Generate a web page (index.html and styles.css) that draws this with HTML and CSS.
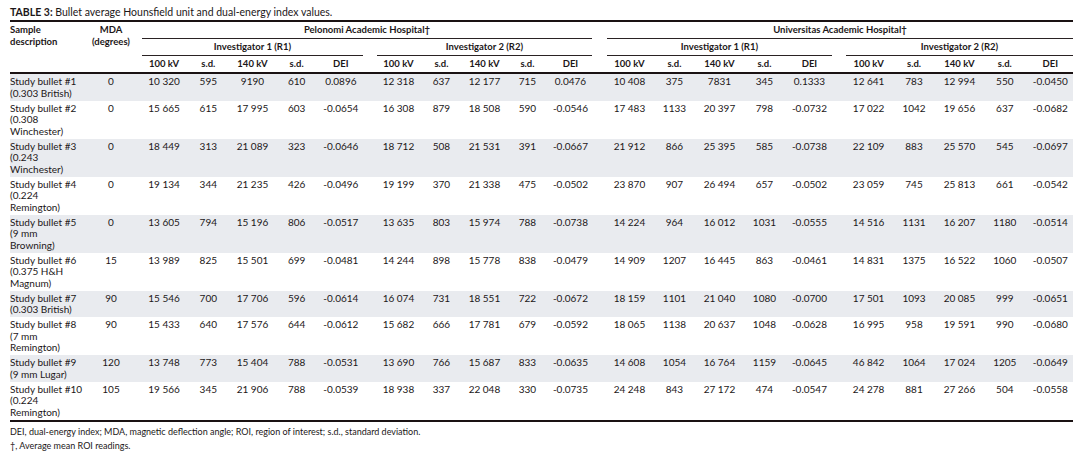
FILE: index.html
```html
<!DOCTYPE html>
<html>
<head>
<meta charset="utf-8">
<link rel="stylesheet" href="styles.css">
</head>
<body>
<div class="page">
  <div class="title"><b>TABLE 3:</b> Bullet average Hounsfield unit and dual-energy index values.</div>
  <div class="tbl">
    <table>
      <colgroup>
        <col class="c-desc"><col class="c-mda"><col class="c-sp0">
        <col class="c-a"><col class="c-a"><col class="c-a"><col class="c-a"><col class="c-a">
        <col class="c-sp1">
        <col class="c-b"><col class="c-b"><col class="c-b"><col class="c-b"><col class="c-b">
        <col class="c-sp2">
        <col class="c-c"><col class="c-c"><col class="c-c"><col class="c-c"><col class="c-c">
        <col class="c-sp1">
        <col class="c-d"><col class="c-d"><col class="c-d"><col class="c-d"><col class="c-d">
      </colgroup>
      <thead>
        <tr class="h1">
          <th rowspan="3" class="desc">Sample<br>description</th>
          <th rowspan="3" class="mda">MDA<br>(degrees)</th>
          <th rowspan="3"></th>
          <th colspan="11" class="rule">Pelonomi Academic Hospital†</th>
          <th></th>
          <th colspan="11" class="rule">Universitas Academic Hospital†</th>
        </tr>
        <tr class="h2">
          <th colspan="5" class="rule">Investigator 1 (R1)</th>
          <th></th>
          <th colspan="5" class="rule">Investigator 2 (R2)</th>
          <th></th>
          <th colspan="5" class="rule">Investigator 1 (R1)</th>
          <th></th>
          <th colspan="5" class="rule">Investigator 2 (R2)</th>
        </tr>
        <tr class="h3">
          <th>100 kV</th><th>s.d.</th><th>140 kV</th><th>s.d.</th><th>DEI</th>
          <th></th>
          <th>100 kV</th><th>s.d.</th><th>140 kV</th><th>s.d.</th><th>DEI</th>
          <th></th>
          <th>100 kV</th><th>s.d.</th><th>140 kV</th><th>s.d.</th><th>DEI</th>
          <th></th>
          <th>100 kV</th><th>s.d.</th><th>140 kV</th><th>s.d.</th><th>DEI</th>
        </tr>
      </thead>
      <tbody>
        <tr class="shade">
          <td class="desc">Study bullet #1<br>(0.303 British)</td><td>0</td><td></td>
          <td>10 320</td><td>595</td><td>9190</td><td>610</td><td>0.0896</td><td></td>
          <td>12 318</td><td>637</td><td>12 177</td><td>715</td><td>0.0476</td><td></td>
          <td>10 408</td><td>375</td><td>7831</td><td>345</td><td>0.1333</td><td></td>
          <td>12 641</td><td>783</td><td>12 994</td><td>550</td><td>-0.0450</td>
        </tr>
        <tr>
          <td class="desc">Study bullet #2<br>(0.308<br>Winchester)</td><td>0</td><td></td>
          <td>15 665</td><td>615</td><td>17 995</td><td>603</td><td>-0.0654</td><td></td>
          <td>16 308</td><td>879</td><td>18 508</td><td>590</td><td>-0.0546</td><td></td>
          <td>17 483</td><td>1133</td><td>20 397</td><td>798</td><td>-0.0732</td><td></td>
          <td>17 022</td><td>1042</td><td>19 656</td><td>637</td><td>-0.0682</td>
        </tr>
        <tr class="shade">
          <td class="desc">Study bullet #3<br>(0.243<br>Winchester)</td><td>0</td><td></td>
          <td>18 449</td><td>313</td><td>21 089</td><td>323</td><td>-0.0646</td><td></td>
          <td>18 712</td><td>508</td><td>21 531</td><td>391</td><td>-0.0667</td><td></td>
          <td>21 912</td><td>866</td><td>25 395</td><td>585</td><td>-0.0738</td><td></td>
          <td>22 109</td><td>883</td><td>25 570</td><td>545</td><td>-0.0697</td>
        </tr>
        <tr>
          <td class="desc">Study bullet #4<br>(0.224<br>Remington)</td><td>0</td><td></td>
          <td>19 134</td><td>344</td><td>21 235</td><td>426</td><td>-0.0496</td><td></td>
          <td>19 199</td><td>370</td><td>21 338</td><td>475</td><td>-0.0502</td><td></td>
          <td>23 870</td><td>907</td><td>26 494</td><td>657</td><td>-0.0502</td><td></td>
          <td>23 059</td><td>745</td><td>25 813</td><td>661</td><td>-0.0542</td>
        </tr>
        <tr class="shade">
          <td class="desc">Study bullet #5<br>(9 mm<br>Browning)</td><td>0</td><td></td>
          <td>13 605</td><td>794</td><td>15 196</td><td>806</td><td>-0.0517</td><td></td>
          <td>13 635</td><td>803</td><td>15 974</td><td>788</td><td>-0.0738</td><td></td>
          <td>14 224</td><td>964</td><td>16 012</td><td>1031</td><td>-0.0555</td><td></td>
          <td>14 516</td><td>1131</td><td>16 207</td><td>1180</td><td>-0.0514</td>
        </tr>
        <tr>
          <td class="desc">Study bullet #6<br>(0.375 H&amp;H<br>Magnum)</td><td>15</td><td></td>
          <td>13 989</td><td>825</td><td>15 501</td><td>699</td><td>-0.0481</td><td></td>
          <td>14 244</td><td>898</td><td>15 778</td><td>838</td><td>-0.0479</td><td></td>
          <td>14 909</td><td>1207</td><td>16 445</td><td>863</td><td>-0.0461</td><td></td>
          <td>14 831</td><td>1375</td><td>16 522</td><td>1060</td><td>-0.0507</td>
        </tr>
        <tr class="shade">
          <td class="desc">Study bullet #7<br>(0.303 British)</td><td>90</td><td></td>
          <td>15 546</td><td>700</td><td>17 706</td><td>596</td><td>-0.0614</td><td></td>
          <td>16 074</td><td>731</td><td>18 551</td><td>722</td><td>-0.0672</td><td></td>
          <td>18 159</td><td>1101</td><td>21 040</td><td>1080</td><td>-0.0700</td><td></td>
          <td>17 501</td><td>1093</td><td>20 085</td><td>999</td><td>-0.0651</td>
        </tr>
        <tr>
          <td class="desc">Study bullet #8<br>(7 mm<br>Remington)</td><td>90</td><td></td>
          <td>15 433</td><td>640</td><td>17 576</td><td>644</td><td>-0.0612</td><td></td>
          <td>15 682</td><td>666</td><td>17 781</td><td>679</td><td>-0.0592</td><td></td>
          <td>18 065</td><td>1138</td><td>20 637</td><td>1048</td><td>-0.0628</td><td></td>
          <td>16 995</td><td>958</td><td>19 591</td><td>990</td><td>-0.0680</td>
        </tr>
        <tr class="shade">
          <td class="desc">Study bullet #9<br>(9 mm Lugar)</td><td>120</td><td></td>
          <td>13 748</td><td>773</td><td>15 404</td><td>788</td><td>-0.0531</td><td></td>
          <td>13 690</td><td>766</td><td>15 687</td><td>833</td><td>-0.0635</td><td></td>
          <td>14 608</td><td>1054</td><td>16 764</td><td>1159</td><td>-0.0645</td><td></td>
          <td>46 842</td><td>1064</td><td>17 024</td><td>1205</td><td>-0.0649</td>
        </tr>
        <tr>
          <td class="desc">Study bullet #10<br>(0.224<br>Remington)</td><td>105</td><td></td>
          <td>19 566</td><td>345</td><td>21 906</td><td>788</td><td>-0.0539</td><td></td>
          <td>18 938</td><td>337</td><td>22 048</td><td>330</td><td>-0.0735</td><td></td>
          <td>24 248</td><td>843</td><td>27 172</td><td>474</td><td>-0.0547</td><td></td>
          <td>24 278</td><td>881</td><td>27 266</td><td>504</td><td>-0.0558</td>
        </tr>
      </tbody>
    </table>
  </div>
  <div class="notes">
    <p>DEI, dual-energy index; MDA, magnetic deflection angle; ROI, region of interest; s.d., standard deviation.</p>
    <p>†, Average mean ROI readings.</p>
  </div>
</div>
</body>
</html>
```

FILE: styles.css
```css
html, body {
  margin: 0;
  padding: 0;
  background: #ffffff;
}
body {
  font-family: Lato, "Liberation Sans", sans-serif;
  color: #1c1718;
}
.page {
  width: 1063px;
  padding: 6px 10px 0 10px;
}
.title {
  font-size: 10.5px;
  line-height: 13px;
  height: 14px;
}
.title b {
  font-weight: 700;
}
.tbl {
  border-top: 2px solid #1a1213;
  border-bottom: 2px solid #1a1213;
}
table {
  width: 1063px;
  table-layout: fixed;
  border-collapse: collapse;
  border-spacing: 0;
}
.c-desc { width: 78px; }
.c-mda { width: 46px; }
.c-sp0 { width: 8px; }
.c-a { width: 44.2px; }
.c-sp1 { width: 14px; }
.c-b { width: 43px; }
.c-sp2 { width: 15px; }
.c-c { width: 45px; }
.c-d { width: 45.4px; }

th {
  font-size: 9.5px;
  font-weight: 700;
  line-height: 12px;
  padding: 0;
  text-align: center;
  vertical-align: middle;
}
th.desc {
  text-align: left;
  vertical-align: top;
  padding-top: 2px;
}
th.mda {
  vertical-align: top;
  padding-top: 2px;
}
th.rule {
  border-bottom: 1px solid #2a2223;
}
tr.h1 { height: 16px; }
tr.h2 { height: 17px; }
tr.h3 { height: 18px; }

td {
  font-size: 10px;
  line-height: 11.5px;
  padding: 2px 0 1.5px 0;
  text-align: center;
  vertical-align: top;
  white-space: nowrap;
}
td.desc {
  text-align: left;
}
tbody tr:first-child td {
  border-top: 2px solid #1a1213;
}
tr.shade td {
  background: #e9ebef;
}
.notes {
  padding-top: 3px;
  font-size: 9px;
  line-height: 14px;
}
.notes p {
  margin: 0;
}
```
